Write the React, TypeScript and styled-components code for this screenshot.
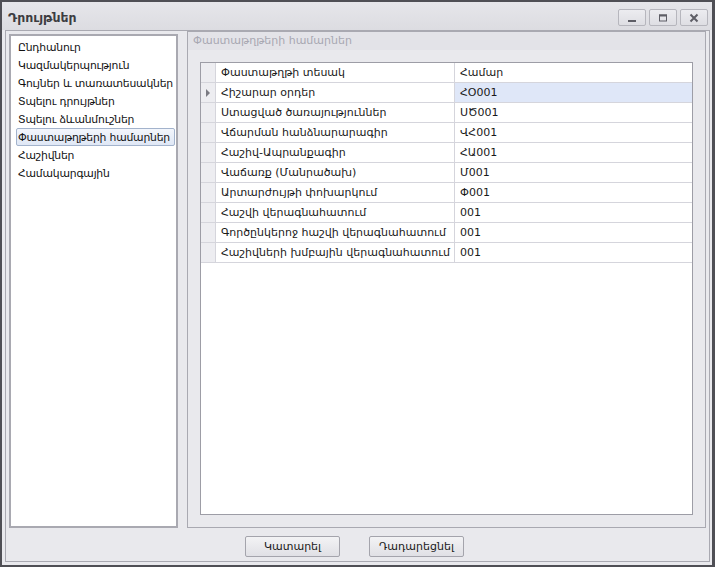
import React from "react";
import styled, { createGlobalStyle } from "styled-components";

const Global = createGlobalStyle`
  html, body { margin: 0; padding: 0; background: #e9e9ed; }
  * { box-sizing: border-box; }
  body { font-family: "DejaVu Sans", "Noto Sans", sans-serif; }
`;

const Win = styled.div`
  width: 715px;
  height: 567px;
  border: 2px solid #4f4f55;
  border-right-width: 3px;
  background: #e9e9ed;
  display: flex;
  flex-direction: column;
  font-family: "DejaVu Sans", sans-serif;
  font-size: 11px;
  color: #1a1a1a;
`;

const TitleBar = styled.div`
  height: 28px;
  flex: none;
  display: flex;
  align-items: center;
  padding: 0 4px 0 6px;
  background: linear-gradient(#e6e6ea, #dcdce1);
`;

const Title = styled.div`
  flex: 1;
  font-size: 12.5px;
  font-weight: bold;
  color: #3c3c40;
  padding-top: 3px;
`;

const TitleButtons = styled.div`
  display: flex;
  gap: 3px;
  margin-top: 3px;
`;

const TitleBtn = styled.div`
  width: 28px;
  height: 17px;
  border: 1px solid #b6b6bd;
  border-radius: 2px;
  background: linear-gradient(#ececf0, #dedee3);
  display: flex;
  align-items: center;
  justify-content: center;
`;

const Frame = styled.div`
  flex: 1;
  margin: 0 2px 3px 3px;
  border: 1px solid #a9a9b1;
  display: flex;
  flex-direction: column;
  padding: 0 3px;
`;

const Main = styled.div`
  display: flex;
  gap: 9px;
  height: 497px;
`;

const ListBox = styled.div`
  width: 169px;
  margin-top: 3px;
  border: 2px solid #a9a9b1;
  background: #fff;
  padding: 2px 0 0 5px;
  display: flex;
  flex-direction: column;
`;

const ListItem = styled.div<{ $sel?: boolean }>`
  height: 18px;
  line-height: 17px;
  padding-left: 1px;
  margin-right: 1px;
  white-space: nowrap;
  font-size: 10.8px;
  letter-spacing: -0.2px;
  border: 1px solid ${(p) => (p.$sel ? "#a3b3cc" : "transparent")};
  border-radius: 2px;
  background: ${(p) => (p.$sel ? "linear-gradient(#f3f6fc, #dfe7f5)" : "transparent")};
  color: #111;
`;

const Group = styled.div`
  flex: 1;
  border: 1px solid #a9a9b1;
  display: flex;
  flex-direction: column;
`;

const GroupHeader = styled.div`
  height: 18px;
  line-height: 18px;
  background: #e3e3e8;
  color: #a8a8b2;
  padding-left: 5px;
  font-size: 11px;
`;

const GroupBody = styled.div`
  flex: 1;
  padding: 12px;
  display: flex;
`;

const Grid = styled.div`
  flex: 1;
  border: 1px solid #9d9da6;
  background: #fff;
  display: flex;
  flex-direction: column;
`;

const Row = styled.div`
  display: grid;
  grid-template-columns: 15px 239px 1fr;
  height: 20px;
  border-bottom: 1px solid #d5d5dc;
`;

const RowHead = styled.div`
  background: #ededf1;
  border-right: 1px solid #d5d5dc;
  display: flex;
  align-items: center;
  justify-content: center;
`;

const Cell = styled.div<{ $sel?: boolean; $last?: boolean }>`
  padding-left: 5px;
  line-height: 19px;
  white-space: nowrap;
  overflow: hidden;
  border-right: ${(p) => (p.$last ? "none" : "1px solid #d5d5dc")};
  background: ${(p) => (p.$sel ? "#dfe7f8" : "#fff")};
  color: #1a1a1a;
`;

const Footer = styled.div`
  flex: 1;
  display: flex;
  justify-content: center;
  align-items: flex-start;
  gap: 29px;
  padding-top: 8px;
  margin-right: 6px;
`;

const Button = styled.div`
  width: 95px;
  height: 21px;
  border: 1px solid #a4a4ac;
  border-radius: 2px;
  background: linear-gradient(#f3f3f5, #e0e0e5);
  display: flex;
  align-items: center;
  justify-content: center;
  font-size: 11px;
  color: #1a1a1a;
`;

const navItems = [
  "Ընդհանուր",
  "Կազմակերպություն",
  "Գույներ և տառատեսակներ",
  "Տպելու դրույթներ",
  "Տպելու ձևանմուշներ",
  "Փաստաթղթերի համարներ",
  "Հաշիվներ",
  "Համակարգային",
];

const rows: [string, string][] = [
  ["Հիշարար օրդեր", "ՀՕ001"],
  ["Ստացված ծառայություններ", "ՍԾ001"],
  ["Վճարման հանձնարարագիր", "ՎՀ001"],
  ["Հաշիվ-Ապրանքագիր", "ՀԱ001"],
  ["Վաճառք (Մանրածախ)", "Մ001"],
  ["Արտարժույթի փոխարկում", "Փ001"],
  ["Հաշվի վերագնահատում", "001"],
  ["Գործընկերոջ հաշվի վերագնահատում", "001"],
  ["Հաշիվների խմբային վերագնահատում", "001"],
];

export default function App() {
  return (
    <>
      <Global />
      <Win>
        <TitleBar>
          <Title>Դրույթներ</Title>
          <TitleButtons>
            <TitleBtn>
              <svg width="10" height="10" viewBox="0 0 10 10">
                <rect x="1" y="7" width="8" height="2" fill="#5e5e66" />
              </svg>
            </TitleBtn>
            <TitleBtn>
              <svg width="10" height="10" viewBox="0 0 10 10">
                <rect x="1.5" y="2" width="7" height="6" fill="none" stroke="#5e5e66" strokeWidth="1" />
                <rect x="1" y="1.5" width="8" height="2" fill="#5e5e66" />
              </svg>
            </TitleBtn>
            <TitleBtn>
              <svg width="10" height="10" viewBox="0 0 10 10">
                <path d="M1.5 1.5 L8.5 8.5 M8.5 1.5 L1.5 8.5" stroke="#5e5e66" strokeWidth="2" />
              </svg>
            </TitleBtn>
          </TitleButtons>
        </TitleBar>
        <Frame>
          <Main>
            <ListBox>
              {navItems.map((t, i) => (
                <ListItem key={t} $sel={i === 5}>
                  {t}
                </ListItem>
              ))}
            </ListBox>
            <Group>
              <GroupHeader>Փաստաթղթերի համարներ</GroupHeader>
              <GroupBody>
                <Grid>
                  <Row>
                    <RowHead />
                    <Cell>Փաստաթղթի տեսակ</Cell>
                    <Cell $last>Համար</Cell>
                  </Row>
                  {rows.map(([a, b], i) => (
                    <Row key={a}>
                      <RowHead>
                        {i === 0 && (
                          <svg width="5" height="8" viewBox="0 0 5 8">
                            <path d="M0 0 L4 4 L0 8 Z" fill="#7a7a82" />
                          </svg>
                        )}
                      </RowHead>
                      <Cell>{a}</Cell>
                      <Cell $last $sel={i === 0}>{b}</Cell>
                    </Row>
                  ))}
                </Grid>
              </GroupBody>
            </Group>
          </Main>
          <Footer>
            <Button>Կատարել</Button>
            <Button>Դադարեցնել</Button>
          </Footer>
        </Frame>
      </Win>
    </>
  );
}
